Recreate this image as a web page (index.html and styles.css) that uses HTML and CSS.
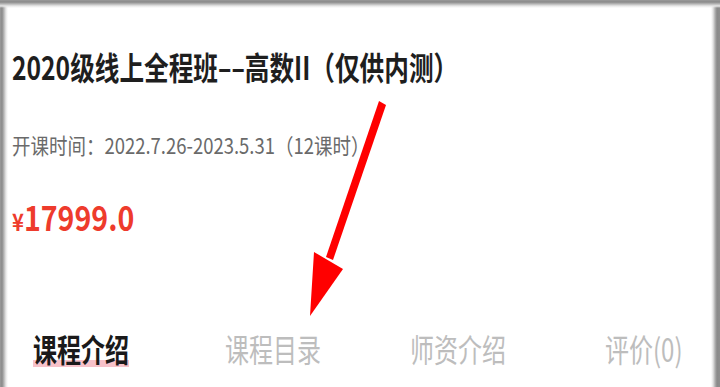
FILE: index.html
```html
<!DOCTYPE html>
<html lang="zh-CN">
<head>
<meta charset="utf-8">
<link rel="stylesheet" href="styles.css">
</head>
<body>
<div class="frame">
  <div class="info">
    <h1 class="title"><span class="sq">2020级线上全程班––高数II（仅供内测）</span></h1>
    <p class="date"><span class="sq">开课时间：2022.7.26-2023.5.31（12课时）</span></p>
    <p class="price"><span class="sq"><span class="yen">¥</span>17999.0</span></p>
  </div>
  <div class="tabs">
    <div class="tab active"><span class="sq">课程介绍</span></div>
    <div class="tab"><span class="sq">课程目录</span></div>
    <div class="tab"><span class="sq">师资介绍</span></div>
    <div class="tab"><span class="sq">评价(0)</span></div>
  </div>
  <svg class="arrow" width="720" height="387" viewBox="0 0 720 387">
    <polygon points="379,101 386,105 333,260 326,257" fill="#ff0000"/>
    <polygon points="314,252 343,269 310,316" fill="#ff0000"/>
  </svg>
</div>
</body>
</html>
```
FILE: styles.css
```css
html, body {
  margin: 0;
  padding: 0;
  background: #ffffff;
}
body {
  width: 720px;
  height: 387px;
  overflow: hidden;
  font-family: "Noto Sans CJK SC", "Noto Sans", sans-serif;
}
.frame {
  position: relative;
  width: 720px;
  height: 387px;
  box-sizing: border-box;
  background:
    linear-gradient(to bottom, #9a9a9a 0, #8a8a8a 2px, #b8b8b8 4px, #e8e8e8 6px, rgba(255,255,255,0) 8px) top left / 100% 8px no-repeat,
    linear-gradient(to right, #9a9a9a 0, #8a8a8a 2px, #b8b8b8 4px, #e8e8e8 6px, rgba(255,255,255,0) 8px) top left / 8px 100% no-repeat,
    linear-gradient(to left, #8e8e8e 0, #8a8a8a 3px, #b0b0b0 5px, #e4e4e4 7px, rgba(255,255,255,0) 9px) top right / 9px 100% no-repeat,
    #ffffff;
  display: flex;
  flex-direction: column;
}
.sq {
  display: inline-block;
  transform: scaleX(0.75);
  transform-origin: left center;
  white-space: nowrap;
}
.info {
  padding: 46px 0 0 12px;
}
.title {
  margin: 0;
  font-size: 32px;
  line-height: 40px;
  font-weight: 700;
  color: #1e1e1e;
}
.title .sq {
  transform: scaleX(0.77);
}
.date {
  margin: 44px 0 0 0;
  font-size: 22px;
  line-height: 28px;
  color: #6a6a6a;
}
.date .sq {
  transform: scaleX(0.84);
}
.price {
  margin: 39px 0 0 0;
  font-size: 34px;
  line-height: 40px;
  font-weight: 700;
  color: #ee3b2c;
}
.price .sq {
  transform: scaleX(0.84);
}
.yen {
  font-size: 24px;
  font-weight: 700;
}
.tabs {
  margin-top: auto;
  padding: 0 0 19px 33px;
  display: grid;
  grid-template-columns: 192px 185px 195px 1fr;
  font-size: 32px;
  line-height: 40px;
  color: #bdbdbd;
}
.tab.active {
  color: #1a1a1a;
  font-weight: 700;
}
.tab.active .sq {
  position: relative;
  z-index: 0;
}
.tab.active .sq::after {
  content: "";
  position: absolute;
  left: 0;
  right: 0;
  bottom: 1px;
  height: 7px;
  background: #f7c2ca;
  z-index: -1;
}
.arrow {
  position: absolute;
  left: 0;
  top: 0;
}
```
